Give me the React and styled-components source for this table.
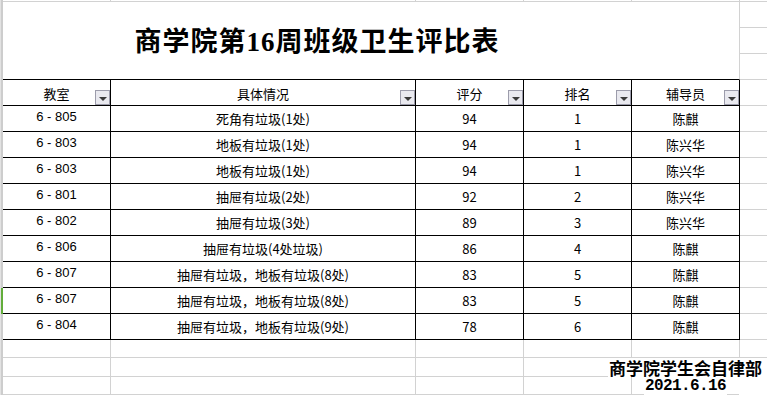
import React from 'react';
import styled, { createGlobalStyle } from 'styled-components';

const GlobalStyle = createGlobalStyle`
  html, body {
    margin: 0;
    padding: 0;
    background: #fff;
    overflow: hidden;
  }
  body {
    font-family: "Noto Sans CJK SC", "Liberation Sans", sans-serif;
    color: #000;
  }
`;

const GRID = '#d2d2d2';

const Sheet = styled.div`
  display: grid;
  grid-template-columns: 3px 108px 305px 108px 108px 108px 40px;
  grid-template-rows: 2px repeat(13, 26px) 18px 19px 18px 18px;
  width: 780px;
`;

const Gutter = styled.div`
  grid-column: 1;
  grid-row: 1 / -1;
  background: #cdcdcd;
  border-left: 1px solid #e2e2e2;
`;

const SelectMark = styled.div`
  grid-column: 1;
  grid-row: ${(p) => p.$row};
  margin-left: 1px;
  width: 2px;
  background: #62ad3b;
`;

const Cell = styled.div`
  grid-row: ${(p) => p.$row};
  grid-column: ${(p) => p.$col};
  border-right: 1px solid ${(p) => (p.$ruled ? '#000' : GRID)};
  border-bottom: 1px solid ${(p) => (p.$ruled ? '#000' : GRID)};
  display: flex;
  align-items: ${(p) => (p.$raised ? 'flex-start' : 'center')};
  justify-content: center;
  padding-top: ${(p) => (p.$raised ? '3px' : '0')};
  box-sizing: border-box;
  font-family: ${(p) =>
    p.$raised ? '"Liberation Sans", sans-serif' : '"Noto Sans CJK SC", sans-serif'};
  font-size: 13px;
  line-height: 15px;
  white-space: nowrap;
  position: relative;
`;

const TitleCell = styled.div`
  grid-row: 2 / 5;
  grid-column: 2 / 7;
  border-right: 1px solid ${GRID};
  border-bottom: 1px solid #000;
  display: flex;
  align-items: center;
  justify-content: center;
  padding: 0 108px 2px 0;
  font-family: "Liberation Serif", "Noto Sans CJK SC", serif;
  font-weight: 700;
  font-size: 27px;
  letter-spacing: 1px;
`;

const HeadLabel = styled.span`
  margin-top: 2px;
`;

const Filter = styled.div`
  position: absolute;
  right: 0;
  bottom: 0;
  width: 15px;
  height: 15px;
  box-sizing: border-box;
  border: 1px solid #9c9cab;
  background: #e9e9ef;
  display: flex;
  align-items: center;
  justify-content: center;
  &::after {
    content: '';
    margin-top: 2px;
    border-left: 4px solid transparent;
    border-right: 4px solid transparent;
    border-top: 4px solid #3a3a3a;
  }
`;

const Footer = styled.div`
  grid-row: 16 / 18;
  grid-column: 6 / 8;
  border-bottom: 1px solid ${GRID};
  display: flex;
  flex-direction: column;
  align-items: center;
  width: 107px;
  font-weight: 700;
  white-space: nowrap;
`;

const FooterLine = styled.span`
  position: relative;
  z-index: 1;
  background: #fff;
  height: ${(p) => p.$h}px;
  line-height: ${(p) => p.$h}px;
  font-size: ${(p) => p.$size}px;
  letter-spacing: ${(p) => (p.$mono ? '-0.6px' : '0')};
  font-family: ${(p) =>
    p.$mono ? '"Liberation Mono", monospace' : '"Noto Sans CJK SC", sans-serif'};
  padding: 0 1px;
`;

const headers = ['教室', '具体情况', '评分', '排名', '辅导员'];

const rows = [
  ['6 - 805', '死角有垃圾(1处)', '94', '1', '陈麒'],
  ['6 - 803', '地板有垃圾(1处)', '94', '1', '陈兴华'],
  ['6 - 803', '地板有垃圾(1处)', '94', '1', '陈兴华'],
  ['6 - 801', '抽屉有垃圾(2处)', '92', '2', '陈兴华'],
  ['6 - 802', '抽屉有垃圾(3处)', '89', '3', '陈兴华'],
  ['6 - 806', '抽屉有垃圾(4处垃圾)', '86', '4', '陈麒'],
  ['6 - 807', '抽屉有垃圾，地板有垃圾(8处)', '83', '5', '陈麒'],
  ['6 - 807', '抽屉有垃圾，地板有垃圾(8处)', '83', '5', '陈麒'],
  ['6 - 804', '抽屉有垃圾，地板有垃圾(9处)', '78', '6', '陈麒'],
];

const App = () => {
  const cells = [];

  // top sliver of the previous row
  for (let c = 2; c <= 7; c++) cells.push(<Cell key={`s${c}`} $row={1} $col={c} />);

  // column F beside the title
  for (let r = 2; r <= 4; r++) cells.push(<Cell key={`f${r}`} $row={r} $col={7} />);

  headers.forEach((h, i) => {
    cells.push(
      <Cell key={`h${i}`} $row={5} $col={i + 2} $ruled>
        <HeadLabel>{h}</HeadLabel>
        <Filter />
      </Cell>
    );
  });
  cells.push(<Cell key="hf" $row={5} $col={7} />);

  rows.forEach((row, r) => {
    row.forEach((v, i) => {
      cells.push(
        <Cell key={`d${r}-${i}`} $row={r + 6} $col={i + 2} $ruled $raised={i === 0}>
          {v}
        </Cell>
      );
    });
    cells.push(<Cell key={`df${r}`} $row={r + 6} $col={7} />);
  });

  // empty rows under the table
  for (let r = 15; r <= 18; r++) {
    for (let c = 2; c <= 7; c++) {
      if ((r === 16 || r === 17) && c >= 6) continue;
      cells.push(<Cell key={`e${r}-${c}`} $row={r} $col={c} />);
    }
  }

  return (
    <>
      <GlobalStyle />
      <Sheet>
        <Gutter />
        <SelectMark $row={13} />
        <TitleCell>商学院第16周班级卫生评比表</TitleCell>
        {cells}
        <Footer>
          <FooterLine $h={19} $size={17}>商学院学生会自律部</FooterLine>
          <FooterLine $h={18} $size={16} $mono>2021.6.16</FooterLine>
        </Footer>
      </Sheet>
    </>
  );
};

export default App;
